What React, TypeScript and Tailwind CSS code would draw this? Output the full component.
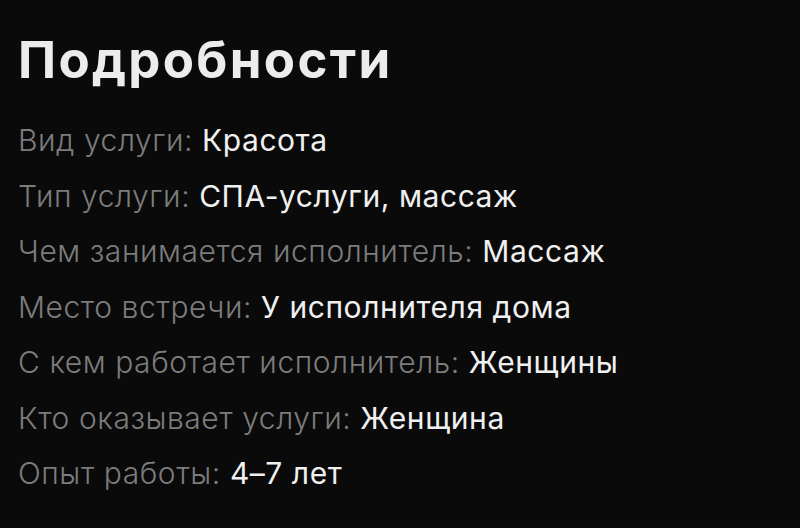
const details = [
  { label: 'Вид услуги', value: 'Красота' },
  { label: 'Тип услуги', value: 'СПА-услуги, массаж' },
  { label: 'Чем занимается исполнитель', value: 'Массаж' },
  { label: 'Место встречи', value: 'У исполнителя дома' },
  { label: 'С кем работает исполнитель', value: 'Женщины' },
  { label: 'Кто оказывает услуги', value: 'Женщина' },
  { label: 'Опыт работы', value: '4–7 лет' },
];

export default function App() {
  return (
    <div
      className="w-[800px] h-[528px] bg-[#0a0a0a] px-[18px] pt-[26px] overflow-hidden"
      style={{ fontFamily: 'Inter, "Noto Sans", sans-serif' }}
    >
      <h2 className="text-[51px] leading-[68px] font-bold text-[#ececec] tracking-[2.3px]">
        Подробности
      </h2>
      <div className="mt-[19px] flex flex-col">
        {details.map((item) => (
          <p key={item.label} className="text-[30px] leading-[55.5px] tracking-[0.55px]">
            <span className="font-light text-[#7c7c7c]">{item.label}: </span>
            <span className="text-[#f0f0f0]">{item.value}</span>
          </p>
        ))}
      </div>
    </div>
  );
}
